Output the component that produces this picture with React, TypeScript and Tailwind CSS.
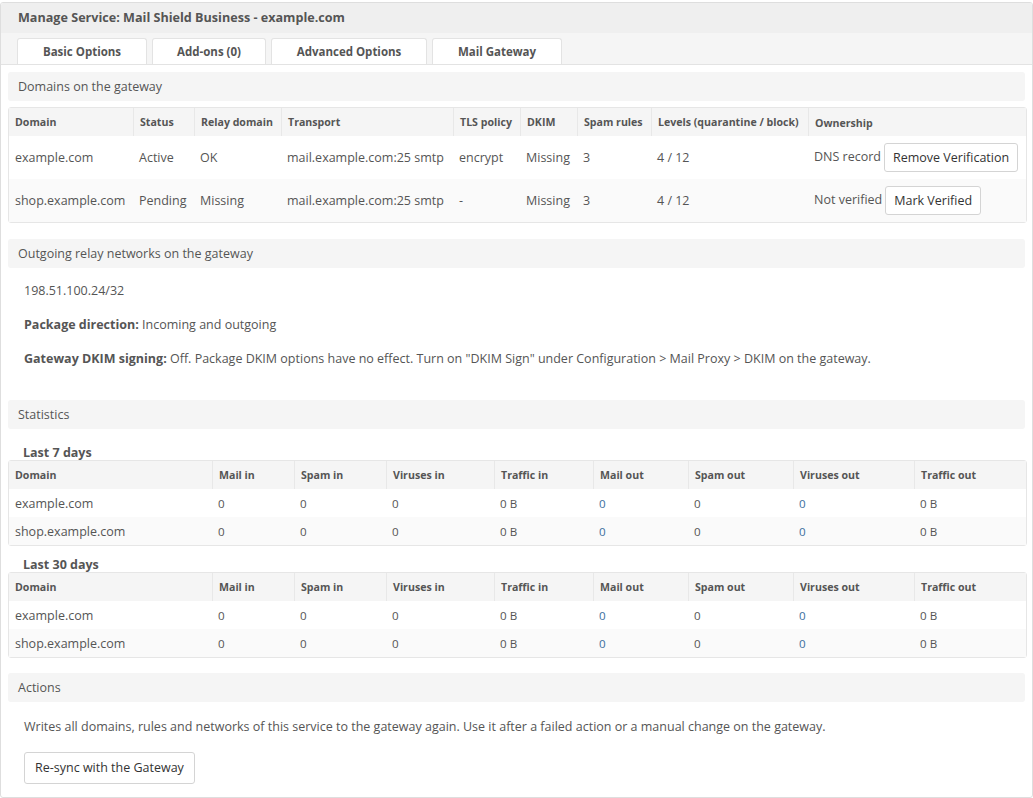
import React from 'react'

const font = { fontFamily: '"Open Sans", "Noto Sans", sans-serif' }

const domainCols = [124, 61, 87, 172, 67, 57, 74, 157, 218]
const statCols = [203, 82, 92, 108, 99, 95, 105, 121, 112]

const domainRows = [
  { domain: 'example.com', status: 'Active', relay: 'OK', transport: 'mail.example.com:25 smtp', tls: 'encrypt', dkim: 'Missing', spam: '3', levels: '4 / 12', owner: 'DNS record', action: 'Remove Verification' },
  { domain: 'shop.example.com', status: 'Pending', relay: 'Missing', transport: 'mail.example.com:25 smtp', tls: '-', dkim: 'Missing', spam: '3', levels: '4 / 12', owner: 'Not verified', action: 'Mark Verified' },
]

const statHeads = ['Domain', 'Mail in', 'Spam in', 'Viruses in', 'Traffic in', 'Mail out', 'Spam out', 'Viruses out', 'Traffic out']
const statDomains = ['example.com', 'shop.example.com']

function SectionTitle({ children }: { children: React.ReactNode }) {
  return (
    <div className="h-[29px] flex items-center pt-[2px] px-[10px] bg-[#f5f5f5] rounded-[3px] text-[12.5px] text-[#555]">
      {children}
    </div>
  )
}

function Btn({ children, className = '' }: { children: React.ReactNode; className?: string }) {
  return (
    <button className={`bg-white border border-[#d4d4d4] rounded-[3px] text-[12.5px] text-[#333] px-[8px] whitespace-nowrap ${className}`}>
      {children}
    </button>
  )
}

function StatTable({ title }: { title: string }) {
  return (
    <div>
      <div className="pl-[15px] h-[24px] flex items-end pb-[1px] leading-[13px] text-[12.5px] font-bold text-[#555]">{title}</div>
      <table className="table-fixed border-separate border-spacing-0 w-[1017px] border border-[#e6e6e6] rounded-[3px] text-[11.6px] text-[#555]">
        <colgroup>
          {statCols.map((w, i) => (
            <col key={i} style={{ width: w }} />
          ))}
        </colgroup>
        <thead>
          <tr className="bg-[#f5f5f5] h-[28px]">
            {statHeads.map((h, i) => (
              <th key={h} className={`text-left font-bold text-[10.6px] px-[6px] pt-[1px] text-[#555] whitespace-nowrap ${i > 0 ? 'border-l border-[#e8e8e8]' : ''}`}>
                {h}
              </th>
            ))}
          </tr>
        </thead>
        <tbody>
          {statDomains.map((d, r) => (
            <tr key={d} className={`h-[28px] ${r === 1 ? 'bg-[#fafafa]' : 'bg-white'}`}>
              <td className="px-[6px] pt-[2px] text-[12.5px]">{d}</td>
              <td className="px-[6px] pt-[2px]">0</td>
              <td className="px-[6px] pt-[2px]">0</td>
              <td className="px-[6px] pt-[2px]">0</td>
              <td className="px-[6px] pt-[2px]">0 B</td>
              <td className="px-[6px] pt-[2px] text-[#3d6f9e]">0</td>
              <td className="px-[6px] pt-[2px]">0</td>
              <td className="px-[6px] pt-[2px] text-[#3d6f9e]">0</td>
              <td className="px-[6px] pt-[2px]">0 B</td>
            </tr>
          ))}
        </tbody>
      </table>
    </div>
  )
}

export default function App() {
  return (
    <div className="w-[1033px] h-[798px] bg-white pt-[2px]" style={font}>
      <div className="border border-[#dedede] rounded-[3px] h-[796px] overflow-hidden">
        <div className="h-[30px] bg-[#efefef] flex items-center px-[17px] text-[12.6px] font-bold text-[#555]">
          Manage Service: Mail Shield Business - example.com
        </div>
        <div className="h-[32px] bg-[#f5f5f5] border-b border-[#e3e3e3] flex items-end pl-[16px] gap-[5px]">
          {['Basic Options', 'Add-ons (0)', 'Advanced Options', 'Mail Gateway'].map((t, i) => (
            <div
              key={t}
              className={`h-[26px] flex items-center justify-center border border-b-0 border-[#e3e3e3] rounded-t-[3px] bg-white text-[11.5px] font-bold text-[#555] ${
                ['w-[130px]', 'w-[114px]', 'w-[156px]', 'w-[130px]'][i]
              }`}
            >
              {t}
            </div>
          ))}
        </div>

        <div className="px-[7px] pt-[7px] flex flex-col">
          <SectionTitle>Domains on the gateway</SectionTitle>
          <table className="mt-[6px] table-fixed border-separate border-spacing-0 w-[1017px] border border-[#e6e6e6] rounded-[3px] text-[12.5px] text-[#555]">
            <colgroup>
              {domainCols.map((w, i) => (
                <col key={i} style={{ width: w }} />
              ))}
            </colgroup>
            <thead>
              <tr className="bg-[#f5f5f5] h-[28px]">
                {['Domain', 'Status', 'Relay domain', 'Transport', 'TLS policy', 'DKIM', 'Spam rules', 'Levels (quarantine / block)', 'Ownership'].map((h, i) => (
                  <th
                    key={h}
                    className={`text-left font-bold text-[10.6px] px-[6px] text-[#555] whitespace-nowrap ${i > 0 ? 'border-l border-[#e8e8e8]' : ''} ${i === 8 ? 'pt-[4px]' : 'pt-[1px]'}`}
                  >
                    {h}
                  </th>
                ))}
              </tr>
            </thead>
            <tbody>
              {domainRows.map((r, idx) => (
                <tr key={r.domain} className={`h-[43px] whitespace-nowrap ${idx === 1 ? 'bg-[#fafafa]' : 'bg-white'}`}>
                  <td className="px-[6px] pt-[2px]">{r.domain}</td>
                  <td className="px-[6px] pt-[2px]">{r.status}</td>
                  <td className="px-[6px] pt-[2px]">{r.relay}</td>
                  <td className="px-[6px] pt-[2px]">{r.transport}</td>
                  <td className="px-[6px] pt-[2px]">{r.tls}</td>
                  <td className="px-[6px] pt-[2px]">{r.dkim}</td>
                  <td className="px-[6px] pt-[2px]">{r.spam}</td>
                  <td className="px-[6px] pt-[2px]">{r.levels}</td>
                  <td className="px-[6px]">
                    <div className="flex items-center gap-[3px]">
                      <span className="-mt-[1px]">{r.owner}</span>
                      <Btn className="h-[29px] pt-[1px]">{r.action}</Btn>
                    </div>
                  </td>
                </tr>
              ))}
            </tbody>
          </table>

          <div className="mt-[16px]">
            <SectionTitle>Outgoing relay networks on the gateway</SectionTitle>
          </div>
          <div className="px-[16px] pt-[14px] text-[12.5px] text-[#555] flex flex-col gap-[16px] leading-[18px]">
            <div>198.51.100.24/32</div>
            <div>
              <span className="font-bold">Package direction:</span> Incoming and outgoing
            </div>
            <div>
              <span className="font-bold">Gateway DKIM signing:</span> Off. Package DKIM options have no effect. Turn on "DKIM Sign" under Configuration &gt; Mail Proxy &gt; DKIM on the gateway.
            </div>
          </div>

          <div className="mt-[32px]">
            <SectionTitle>Statistics</SectionTitle>
          </div>
          <div className="mt-[7px]">
            <StatTable title="Last 7 days" />
          </div>
          <div className="mt-[2px]">
            <StatTable title="Last 30 days" />
          </div>

          <div className="mt-[15px]">
            <SectionTitle>Actions</SectionTitle>
          </div>
          <div className="px-[16px] pt-[16px] text-[12.5px] text-[#555]">
            Writes all domains, rules and networks of this service to the gateway again. Use it after a failed action or a manual change on the gateway.
          </div>
          <div className="px-[16px] pt-[15px]">
            <Btn className="h-[32px] px-[10px] pt-[1px]">Re-sync with the Gateway</Btn>
          </div>
        </div>
      </div>
    </div>
  )
}
